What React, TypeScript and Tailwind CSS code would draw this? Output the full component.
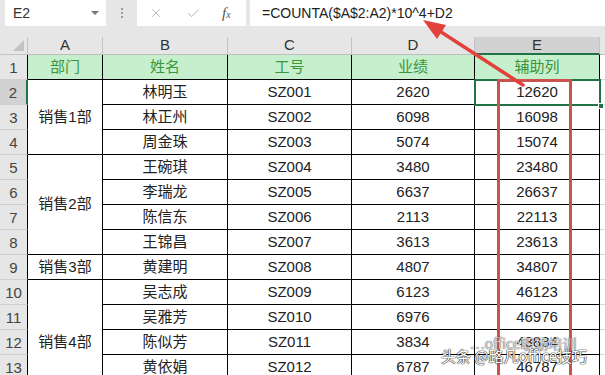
import { Check, X } from "lucide-react";
import clsx from "clsx";

type Row = {
  n: number;
  name: string;
  id: string;
  score: number;
  help: string;
};

const rows: Row[] = [
  { n: 2, name: "林明玉", id: "SZ001", score: 2620, help: "12620" },
  { n: 3, name: "林正州", id: "SZ002", score: 6098, help: "16098" },
  { n: 4, name: "周金珠", id: "SZ003", score: 5074, help: "15074" },
  { n: 5, name: "王碗琪", id: "SZ004", score: 3480, help: "23480" },
  { n: 6, name: "李瑞龙", id: "SZ005", score: 6637, help: "26637" },
  { n: 7, name: "陈信东", id: "SZ006", score: 2113, help: "22113" },
  { n: 8, name: "王锦昌", id: "SZ007", score: 3613, help: "23613" },
  { n: 9, name: "黄建明", id: "SZ008", score: 4807, help: "34807" },
  { n: 10, name: "吴志成", id: "SZ009", score: 6123, help: "46123" },
  { n: 11, name: "吴雅芳", id: "SZ010", score: 6976, help: "46976" },
  { n: 12, name: "陈似芳", id: "SZ011", score: 3834, help: "43834" },
  { n: 13, name: "黄依娟", id: "SZ012", score: 6787, help: "46787" },
  { n: 14, name: "黄丽萍", id: "SZ013", score: 5120, help: "45120" },
];

// merged department cells start on these rows
const depts: Record<number, { label: string; span: string }> = {
  2: { label: "销售1部", span: "row-span-3" },
  5: { label: "销售2部", span: "row-span-4" },
  9: { label: "销售3部", span: "row-span-1" },
  10: { label: "销售4部", span: "row-span-5" },
};

const cell = "flex items-center justify-center border-r border-b border-black";
const colHead =
  "flex items-center justify-center border-r border-[#c4c4c4] border-b border-b-[#bdbdbd] bg-[#e6e6e6] text-[#333]";

function RowHead({ n, active = false }: { n: number; active?: boolean }) {
  return (
    <div
      className={clsx(
        "flex items-center justify-center border-b border-[#cfcfcf] pt-[3px] text-[#444]",
        active
          ? "border-r-2 border-r-[#217346] bg-[#d2d2d2]"
          : "border-r border-r-black bg-[#e6e6e6]"
      )}
    >
      {n}
    </div>
  );
}

function FormulaBar() {
  return (
    <div className="flex h-[26px] bg-[#e6e6e6]">
      <div className="ml-[5px] flex w-[101px] items-center justify-between bg-white pl-[8px] pr-[7px] text-[14px] text-[#333]">
        <span>E2</span>
        <span className="h-0 w-0 border-x-[4px] border-t-[4px] border-x-transparent border-t-[#777]" />
      </div>
      <div className="flex w-[31px] flex-col items-center justify-center gap-[2px]">
        <span className="h-[2px] w-[2px] bg-[#999]" />
        <span className="h-[2px] w-[2px] bg-[#999]" />
        <span className="h-[2px] w-[2px] bg-[#999]" />
      </div>
      <div className="flex w-[109px] items-center bg-white">
        <X size={14} strokeWidth={1.3} className="ml-[12px] text-[#a8a8a8]" />
        <Check size={15} strokeWidth={1.4} className="ml-[23px] text-[#a8a8a8]" />
        <span className="ml-[21px] font-['Liberation_Serif',serif] text-[15px] italic text-[#555]">
          f<span className="text-[10px]">x</span>
        </span>
      </div>
      <div className="ml-[4px] flex flex-1 items-center bg-white pl-[12px] text-[14px] text-[#222]">
        =COUNTA($A$2:A2)*10^4+D2
      </div>
    </div>
  );
}

export default function App() {
  return (
    <div className="relative h-[375px] w-[605px] overflow-hidden bg-white font-['Liberation_Sans','Noto_Sans_CJK_SC',sans-serif] text-[15px] text-[#222]">
      <FormulaBar />
      <div className="h-[11px] bg-[#e6e6e6]" />

      <div className="grid grid-cols-[28px_75px_125px_124px_123px_125px_1fr] grid-rows-[18px_repeat(14,25px)]">
        {/* column letters */}
        <div className="relative border-r border-b border-[#c4c4c4] bg-[#e6e6e6]">
          <span className="absolute right-[3px] bottom-[3px] h-0 w-0 border-l-[11px] border-t-[11px] border-l-transparent border-t-transparent border-b-0 border-r-[11px] border-r-[#c2c2c2]" />
        </div>
        <div className={colHead}>A</div>
        <div className={colHead}>B</div>
        <div className={colHead}>C</div>
        <div className={colHead}>D</div>
        <div className="flex items-center justify-center border-r border-[#c4c4c4] border-b-2 border-b-[#217346] bg-[#d2d2d2] text-[#333]">
          E
        </div>
        <div className="border-b border-[#bdbdbd] bg-[#e6e6e6]" />

        {/* header row */}
        <RowHead n={1} />
        {["部门", "姓名", "工号", "业绩", "辅助列"].map((h) => (
          <div key={h} className={clsx(cell, "bg-[#c6efce] text-[#3a963a]")}>
            {h}
          </div>
        ))}
        <div className="border-b border-[#d9d9d9]" />

        {rows.map((r) => (
          <div key={r.n} className="contents">
            <RowHead n={r.n} active={r.n === 2} />
            {depts[r.n] && (
              <div className={clsx(cell, depts[r.n].span)}>{depts[r.n].label}</div>
            )}
            <div className={cell}>{r.name}</div>
            <div className={cell}>{r.id}</div>
            <div className={cell}>{r.score}</div>
            <div className={cell}>{r.help}</div>
            <div className="border-b border-[#d9d9d9]" />
          </div>
        ))}
      </div>

      {/* active cell E2 */}
      <div className="pointer-events-none absolute left-[474px] top-[79px] h-[27px] w-[127px] border-2 border-[#217346]">
        <span className="absolute -right-[5px] -bottom-[5px] h-[6px] w-[6px] border border-white bg-[#217346]" />
      </div>

      {/* red highlight around the helper column */}
      <div className="pointer-events-none absolute left-[497px] top-[79px] h-[310px] w-[75px] border-[3px] border-[#c9534f]" />

      {/* arrow pointing at the formula */}
      <svg className="pointer-events-none absolute inset-0" width="605" height="375">
        <line x1="523" y1="85" x2="438" y2="30" stroke="#e2413c" strokeWidth="3.5" strokeLinecap="round" />
        <polygon points="423,20 446,25 437,39" fill="#e2413c" />
      </svg>

      {/* watermark */}
      <div className="pointer-events-none absolute left-[470px] top-[336px] font-['Noto_Sans_CJK_SC',sans-serif] text-[14px] leading-none text-white/70 [text-shadow:0_0_1px_#666,0_0_1px_#666]">
        ⋯office职场培训
      </div>
      <div className="pointer-events-none absolute left-[441px] top-[348px] font-['Noto_Sans_CJK_SC',sans-serif] text-[15px] leading-none text-white [text-shadow:0_0_1px_#222,0_0_1px_#222,0_0_1px_#222]">
        头条 @路凡office技巧
      </div>
    </div>
  );
}
